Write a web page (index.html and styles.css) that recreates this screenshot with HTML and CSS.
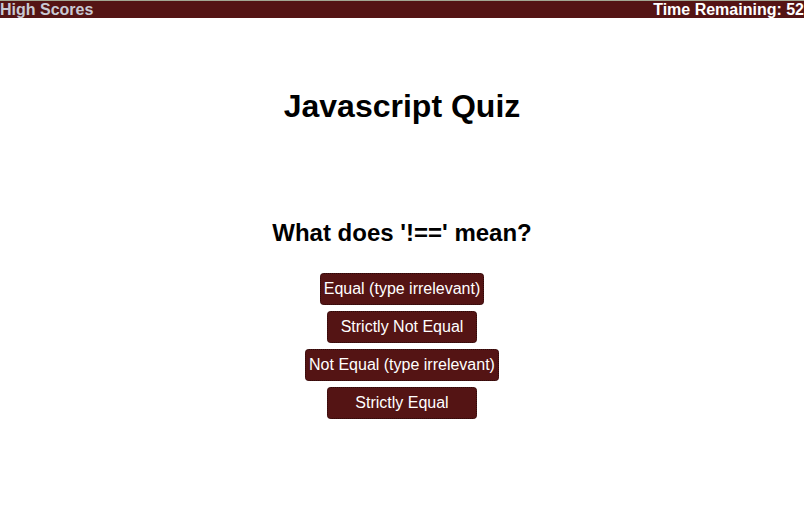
FILE: index.html
```html
<!DOCTYPE html>
<html>
<head>
<meta charset="utf-8">
<link rel="stylesheet" href="styles.css">
</head>
<body>
<header class="topbar">
  <a class="scores">High Scores</a>
  <span class="timer">Time Remaining: 52</span>
</header>
<main class="quiz">
  <h1 class="title">Javascript Quiz</h1>
  <h2 class="question">What does '!==' mean?</h2>
  <div class="answers">
    <button class="answer">Equal (type irrelevant)</button>
    <button class="answer">Strictly Not Equal</button>
    <button class="answer">Not Equal (type irrelevant)</button>
    <button class="answer">Strictly Equal</button>
  </div>
</main>
</body>
</html>
```
FILE: styles.css
```css
html, body {
  margin: 0;
  padding: 0;
  background: #fff;
  font-family: "Liberation Sans", Arial, sans-serif;
}
.topbar {
  display: flex;
  justify-content: space-between;
  align-items: center;
  height: 17px;
  background: #541414;
  border-top: 1px solid #a3a893;
  font-weight: bold;
  font-size: 16px;
  line-height: 17px;
  overflow: hidden;
}
.scores {
  color: #c9c9d3;
}
.timer {
  color: #fff;
}
.quiz {
  display: flex;
  flex-direction: column;
  align-items: center;
}
.title {
  margin: 70px 0 0;
  font-size: 32px;
  line-height: 37px;
  color: #000;
}
.question {
  margin: 94px 0 0;
  font-size: 24px;
  line-height: 28px;
  color: #000;
}
.answers {
  margin-top: 26px;
  display: flex;
  flex-direction: column;
  align-items: center;
  gap: 6px;
}
.answer {
  min-width: 150px;
  height: 32px;
  padding: 0 3px;
  background: #541414;
  color: #fff;
  border: 1px dotted #2a0a0a;
  border-radius: 4px;
  font-family: "Liberation Sans", Arial, sans-serif;
  font-size: 16px;
}
```
